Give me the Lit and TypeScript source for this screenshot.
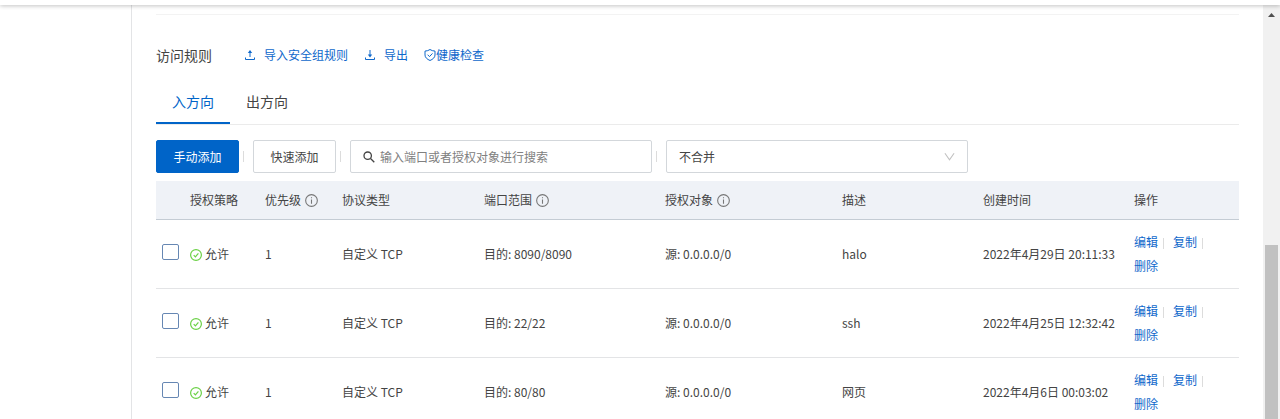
import { LitElement, html, css, svg } from "lit";
import { customElement, property, state } from "lit/decorators.js";

interface Rule {
  priority: string;
  protocol: string;
  port: string;
  source: string;
  note: string;
  created: string;
}

const RULES: Rule[] = [
  { priority: "1", protocol: "自定义 TCP", port: "目的: 8090/8090", source: "源: 0.0.0.0/0", note: "halo", created: "2022年4月29日 20:11:33" },
  { priority: "1", protocol: "自定义 TCP", port: "目的: 22/22", source: "源: 0.0.0.0/0", note: "ssh", created: "2022年4月25日 12:32:42" },
  { priority: "1", protocol: "自定义 TCP", port: "目的: 80/80", source: "源: 0.0.0.0/0", note: "网页", created: "2022年4月6日 00:03:02" },
];

const COLUMNS: { label: string; info?: boolean }[] = [
  { label: "授权策略" },
  { label: "优先级", info: true },
  { label: "协议类型" },
  { label: "端口范围", info: true },
  { label: "授权对象", info: true },
  { label: "描述" },
  { label: "创建时间" },
  { label: "操作" },
];

const GLYPHS = {
  upload: svg`<path d="M1.500 8.500v2h9v-2M6 8V3" /><path class="solid" d="M6 1 8.200 4H3.800Z" />`,
  download: svg`<path d="M1.500 8.500v2h9v-2M6 1V6" /><path class="solid" d="M6 8.500 8.200 5.500H3.800Z" />`,
  shield: svg`<path d="M6 .5c1.400 1 3 1.500 5 1.600v3.900c0 2.500-2.200 4.300-5 5.500C3.200 10.300 1 8.500 1 6V2.100C3 2 4.600 1.500 6 .5ZM3.600 5.700l1.900 1.900 3-3.200" />`,
  search: svg`<circle cx="4.700" cy="4.700" r="3.700" /><path d="M7.500 7.500 11.300 11.300" />`,
  info: svg`<circle cx="6" cy="6" r="5.400" /><path d="M6 5v4M6 3v1" />`,
  check: svg`<circle cx="6" cy="6" r="5.400" /><path d="M3.700 6.100l1.700 1.700 3-3.500" />`,
  chevron: svg`<path d="M1 2.500 6 9.500l5-7" />`,
};

@customElement("line-icon")
export class LineIcon extends LitElement {
  @property() name: keyof typeof GLYPHS = "info";

  static styles = css`
    :host {
      display: inline-flex;
      flex: none;
      width: 12px;
      height: 12px;
    }
    .glyph {
      width: 100%;
      height: 100%;
      fill: none;
      stroke: currentColor;
      stroke-width: 1;
      overflow: visible;
    }
    .solid {
      fill: currentColor;
      stroke: none;
    }
    .search {
      stroke-width: 1.3;
    }
    .check,
    .chevron {
      stroke-width: 1.2;
    }
  `;

  render() {
    return html`<svg class="glyph ${this.name}" viewBox="0 0 12 12" aria-hidden="true">${GLYPHS[this.name]}</svg>`;
  }
}

@customElement("rule-table")
export class RuleTable extends LitElement {
  @property({ attribute: false }) rules: Rule[] = [];

  static styles = css`
    :host {
      display: block;
    }
    .table {
      width: 100%;
      table-layout: fixed;
      border-collapse: separate;
      border-spacing: 0;
      font-size: 12px;
      line-height: 24px;
    }
    .c0 { width: 34px; }
    .c1 { width: 75px; }
    .c2 { width: 77px; }
    .c3 { width: 142px; }
    .c4 { width: 181px; }
    .c5 { width: 177px; }
    .c6 { width: 141px; }
    .c7 { width: 151px; }
    .c8 { width: 105px; }
    .head {
      padding: 7px 0;
      text-align: left;
      font-weight: 400;
      background: #eff2f7;
      border-bottom: 1px solid #c4ccd4;
    }
    .label {
      display: flex;
      align-items: center;
      gap: 4px;
    }
    .label line-icon {
      width: 13px;
      height: 13px;
      color: #777;
    }
    .cell {
      padding: 10px 0;
      border-bottom: 1px solid #e3e4e6;
    }
    .pick {
      padding: 0 0 4px 6px;
    }
    .actions {
      padding-right: 8px;
    }
    .box {
      appearance: none;
      display: block;
      box-sizing: border-box;
      width: 17px;
      height: 16px;
      margin: 0;
      background: #fff;
      border: 1px solid #6687b3;
      border-radius: 2px;
    }
    .box:checked {
      background: #0064c8;
    }
    .status {
      display: flex;
      align-items: center;
      gap: 3px;
    }
    .status line-icon {
      color: #6bd146;
      padding-top: 2px;
    }
    .link {
      color: #0f68cb;
      text-decoration: none;
    }
    .action {
      display: inline-block;
      margin-right: 9px;
    }
    .action:last-child {
      margin-right: 0;
    }
    .bar {
      display: inline-block;
      width: 1px;
      height: 11px;
      margin-left: 5px;
      background: #dcdcdc;
      vertical-align: -2px;
    }
  `;

  render() {
    return html`
      <table class="table">
        <colgroup>
          ${[0, 1, 2, 3, 4, 5, 6, 7, 8].map((i) => html`<col class="c${i}" />`)}
        </colgroup>
        <thead>
          <tr>
            <td class="head"></td>
            ${COLUMNS.map(
              (c) => html`<th class="head" scope="col">
                <span class="label">${c.label}${c.info ? html`<line-icon name="info"></line-icon>` : ""}</span>
              </th>`
            )}
          </tr>
        </thead>
        <tbody>
          ${this.rules.map(
            (r) => html`<tr>
              <td class="cell pick"><input class="box" type="checkbox" aria-label=${r.note} /></td>
              <td class="cell"><span class="status"><line-icon name="check"></line-icon>允许</span></td>
              <td class="cell">${r.priority}</td>
              <td class="cell">${r.protocol}</td>
              <td class="cell">${r.port}</td>
              <td class="cell">${r.source}</td>
              <td class="cell">${r.note}</td>
              <td class="cell">${r.created}</td>
              <td class="cell actions">${["编辑", "复制", "删除"].map(
                (a, i) => html`<span class="action"><a class="link" href="#">${a}</a>${i < 2 ? html`<span class="bar"></span>` : ""}</span>`
              )}</td>
            </tr>`
          )}
        </tbody>
      </table>
    `;
  }
}

@customElement("app-root")
export class AppRoot extends LitElement {
  @state() private tab = 0;

  static styles = css`
    :host {
      display: flex;
      flex-direction: column;
      height: 100vh;
      overflow: hidden;
      background: #fff;
      color: #444;
      font-family: "Noto Sans CJK SC", sans-serif;
      font-size: 12px;
      line-height: 24px;
    }
    .topbar {
      flex: none;
      height: 5px;
      background: #fff;
      box-shadow: 0 1px 4px rgba(0, 0, 0, 0.24);
      z-index: 1;
    }
    .body {
      flex: 1;
      min-height: 0;
      display: flex;
    }
    .side {
      flex: none;
      width: 131px;
      border-right: 1px solid #e3e4e6;
    }
    .main {
      flex: 1;
      min-width: 0;
      overflow: hidden;
      padding: 9px 24px 0;
    }
    .rule {
      height: 1px;
      margin: 0 0 28px;
      border: 0;
      background: #f3f3f3;
    }
    .heading {
      display: flex;
      align-items: center;
      gap: 16px;
    }
    .title {
      margin: 0 16px 0 0;
      font-size: 14px;
      font-weight: 400;
    }
    .link {
      display: flex;
      align-items: center;
      gap: 8px;
      color: #0f68cb;
      text-decoration: none;
    }
    .tight {
      gap: 0;
    }
    .tabs {
      display: flex;
      margin-top: 12px;
      border-bottom: 1px solid #ebebeb;
    }
    .tab {
      padding: 11px 16px 10px;
      border: 0;
      border-bottom: 2px solid transparent;
      background: none;
      color: inherit;
      font: inherit;
      font-size: 14px;
      line-height: 22px;
    }
    .active {
      color: #0064c8;
      border-bottom-color: #0064c8;
    }
    .toolbar {
      display: flex;
      align-items: center;
      margin: 15px 0 8px;
    }
    .btn,
    .field {
      box-sizing: border-box;
      height: 33px;
      border: 1px solid #d3d7db;
      border-radius: 2px;
      background: #fff;
      color: inherit;
      font: inherit;
    }
    .btn {
      padding: 0 16px;
      min-width: 83px;
      line-height: 22px;
    }
    .primary {
      background: #0064c8;
      border-color: #0064c8;
      color: #fff;
    }
    .bar {
      width: 1px;
      height: 11px;
      margin: 0 9px 0 4px;
      background: #dcdcdc;
    }
    .field {
      display: flex;
      align-items: center;
      gap: 5px;
      width: 302px;
      padding: 0 12px;
    }
    .input,
    .select {
      flex: 1;
      min-width: 0;
      padding: 0;
      border: 0;
      outline: 0;
      background: none;
      appearance: none;
      color: inherit;
      font: inherit;
    }
    .input::placeholder {
      color: #808080;
      opacity: 1;
    }
    .chevron {
      color: #c1c1c1;
      width: 11px;
      height: 11px;
    }
    .scroll {
      flex: none;
      width: 17px;
      display: flex;
      flex-direction: column;
      align-items: center;
      background: #f1f1f1;
    }
    .arrow {
      width: 7px;
      height: 4px;
      margin: 8px 0 5px;
      fill: #505050;
    }
    .before {
      flex: 223;
    }
    .thumb {
      flex: 174;
      width: 13px;
      background: #c1c1c1;
    }
  `;

  render() {
    return html`
      <div class="topbar"></div>
      <div class="body">
        <aside class="side"></aside>
        <main class="main">
          <hr class="rule" />
          <div class="heading">
            <h2 class="title">访问规则</h2>
            <a class="link" href="#"><line-icon name="upload"></line-icon>导入安全组规则</a>
            <a class="link" href="#"><line-icon name="download"></line-icon>导出</a>
            <a class="link tight" href="#"><line-icon name="shield"></line-icon>健康检查</a>
          </div>
          <div class="tabs" role="tablist">
            ${["入方向", "出方向"].map(
              (t, i) => html`<button
                class="tab ${this.tab === i ? "active" : ""}"
                role="tab"
                aria-selected=${this.tab === i}
                @click=${() => (this.tab = i)}
              >${t}</button>`
            )}
          </div>
          <div class="toolbar">
            <button class="btn primary">手动添加</button>
            <span class="bar"></span>
            <button class="btn">快速添加</button>
            <span class="bar"></span>
            <label class="field">
              <line-icon name="search"></line-icon>
              <input class="input" type="text" placeholder="输入端口或者授权对象进行搜索" aria-label="输入端口或者授权对象进行搜索" />
            </label>
            <span class="bar"></span>
            <label class="field">
              <select class="select" aria-label="不合并"><option>不合并</option></select>
              <line-icon class="chevron" name="chevron"></line-icon>
            </label>
          </div>
          <rule-table .rules=${RULES}></rule-table>
        </main>
        <div class="scroll" aria-hidden="true">
          <svg class="arrow" viewBox="0 0 7 4"><path d="M3.500 0 7 4H0Z" /></svg>
          <span class="before"></span>
          <span class="thumb"></span>
        </div>
      </div>
    `;
  }
}
